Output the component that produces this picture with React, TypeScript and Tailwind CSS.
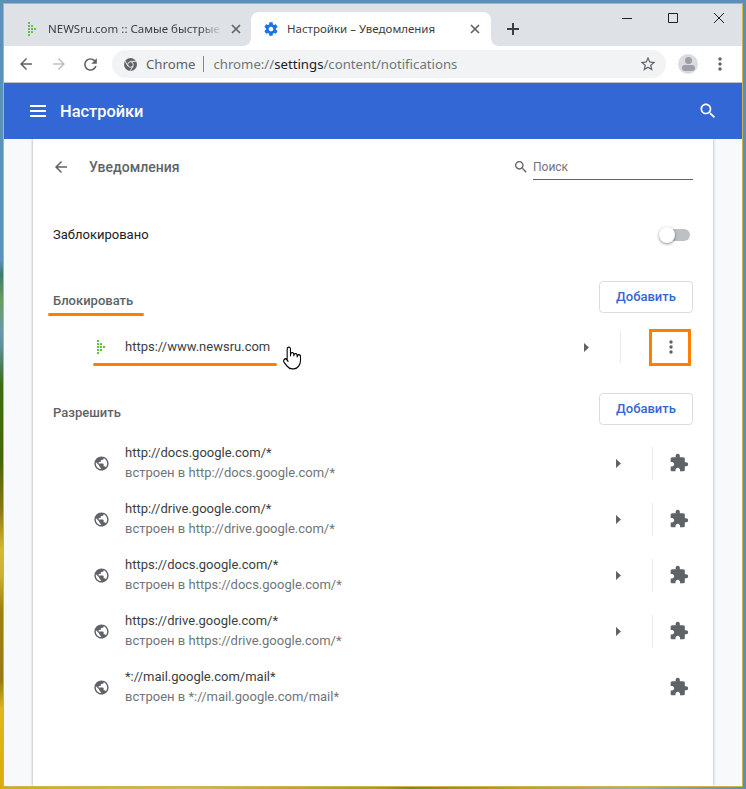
const GLOBE = "M12 2C6.48 2 2 6.48 2 12s4.48 10 10 10 10-4.48 10-10S17.52 2 12 2zm-1 17.93c-3.95-.49-7-3.85-7-7.93 0-.62.08-1.21.21-1.79L9 15v1c0 1.1.9 2 2 2v1.93zm6.9-2.54c-.26-.81-1-1.39-1.9-1.39h-1v-3c0-.55-.45-1-1-1H8v-2h2c.55 0 1-.45 1-1V7h2c1.1 0 2-.9 2-2v-.41c2.93 1.19 5 4.06 5 7.41 0 2.08-.8 3.97-2.1 5.39z";
const PUZZLE = "M20.5 11H19V7c0-1.1-.9-2-2-2h-4V3.5C13 2.12 11.88 1 10.5 1S8 2.12 8 3.5V5H4c-1.1 0-1.99.9-1.99 2v3.8H3.5c1.49 0 2.7 1.21 2.7 2.7s-1.21 2.7-2.7 2.7H2V20c0 1.1.9 2 2 2h3.8v-1.5c0-1.49 1.21-2.7 2.7-2.7 1.49 0 2.7 1.21 2.7 2.7V22H17c1.1 0 2-.9 2-2v-4h1.5c1.38 0 2.5-1.12 2.5-2.5S21.88 11 20.5 11z";
const ARROW = "M20 11H7.83l5.59-5.59L12 4l-8 8 8 8 1.41-1.41L7.83 13H20v-2z";
const REFRESH = "M17.65 6.35C16.2 4.9 14.21 4 12 4c-4.42 0-7.99 3.58-7.99 8s3.57 8 7.99 8c3.73 0 6.84-2.55 7.73-6h-2.08c-.82 2.33-3.04 4-5.65 4-3.31 0-6-2.69-6-6s2.69-6 6-6c1.66 0 3.14.69 4.22 1.78L13 11h7V4l-2.35 2.35z";
const SEARCH = "M15.5 14h-.79l-.28-.27C15.41 12.59 16 11.11 16 9.5 16 5.91 13.09 3 9.5 3S3 5.91 3 9.5 5.91 16 9.5 16c1.61 0 3.09-.59 4.23-1.57l.27.28v.79l5 4.99L20.49 19l-4.99-5zm-6 0C7.01 14 5 11.99 5 9.5S7.01 5 9.5 5 14 7.01 14 9.5 11.99 14 9.5 14z";
const GEAR = "M19.43 12.98c.04-.32.07-.64.07-.98s-.03-.66-.07-.98l2.11-1.65c.19-.15.24-.42.12-.64l-2-3.46c-.12-.22-.39-.3-.61-.22l-2.49 1c-.52-.4-1.08-.73-1.69-.98l-.38-2.65C14.46 2.18 14.25 2 14 2h-4c-.25 0-.46.18-.49.42l-.38 2.65c-.61.25-1.17.59-1.69.98l-2.49-1c-.23-.09-.49 0-.61.22l-2 3.46c-.13.22-.07.49.12.64l2.11 1.65c-.04.32-.07.65-.07.98s.03.66.07.98l-2.11 1.65c-.19.15-.24.42-.12.64l2 3.46c.12.22.39.3.61.22l2.49-1c.52.4 1.08.73 1.69.98l.38 2.65c.03.24.24.42.49.42h4c.25 0 .46-.18.49-.42l.38-2.65c.61-.25 1.17-.59 1.69-.98l2.49 1c.23.09.49 0 .61-.22l2-3.46c.12-.22.07-.49-.12-.64l-2.11-1.65zM12 15.5c-1.93 0-3.5-1.57-3.5-3.5s1.57-3.5 3.5-3.5 3.5 1.57 3.5 3.5-1.57 3.5-3.5 3.5z";
const STAR = "M22 9.24l-7.19-.62L12 2 9.19 8.63 2 9.24l5.46 4.73L5.82 21 12 17.27 18.18 21l-1.63-7.03L22 9.24zM12 15.4l-3.76 2.27 1-4.28-3.32-2.88 4.38-.38L12 6.1l1.71 4.04 4.38.38-3.32 2.88 1 4.28L12 15.4z";

function Icon({ d, size, className }: { d: string; size: number; className?: string }) {
  return (
    <svg width={size} height={size} viewBox="0 0 24 24" className={className} fill="currentColor">
      <path d={d} />
    </svg>
  );
}

function Favicon() {
  const dots = [
    [0, 0], [0, 3], [3, 3], [0, 6], [3, 6], [6, 6], [0, 9], [3, 9], [0, 12],
  ];
  return (
    <svg width="8" height="14" viewBox="0 0 8 14" className="shrink-0">
      {dots.map(([x, y]) => (
        <rect key={`${x}-${y}`} x={x} y={y} width="2" height="2" fill="#5cc73a" />
      ))}
    </svg>
  );
}

function CloseX({ className }: { className?: string }) {
  return (
    <svg width="10" height="10" viewBox="0 0 10 10" className={className} stroke="#5f6368" strokeWidth="1.7" fill="none">
      <path d="M1 1l8 8M9 1l-8 8" />
    </svg>
  );
}

function Triangle() {
  return (
    <svg width="5" height="9" viewBox="0 0 5 9" className="shrink-0">
      <path d="M0 0l5 4.5L0 9z" fill="#5f6368" />
    </svg>
  );
}

function Dots({ tone }: { tone: string }) {
  return (
    <svg width="4" height="14" viewBox="0 0 4 14" className="shrink-0" fill={tone}>
      <circle cx="2" cy="2" r="1.7" />
      <circle cx="2" cy="7" r="1.7" />
      <circle cx="2" cy="12" r="1.7" />
    </svg>
  );
}

function AddButton() {
  return (
    <button className="w-[94px] h-[32px] rounded-[4px] border border-[#dadce0] bg-white text-[13px] font-medium text-[#3367d6] flex items-center justify-center">
      Добавить
    </button>
  );
}

function SiteRow({ title, sub, arrow }: { title: string; sub: string; arrow: boolean }) {
  return (
    <div className="h-[56px] flex items-center pl-[40px]">
      <Icon d={GLOBE} size={17} className="text-[#5f6368] shrink-0" />
      <div className="ml-[15px] flex-1 flex flex-col">
        <div className="text-[13px] leading-[20px] text-[#3c4043]">{title}</div>
        <div className="text-[13px] leading-[20px] text-[#70757a]">{sub}</div>
      </div>
      {arrow && (
        <>
          <Triangle />
          <div className="ml-[31px] w-px h-[32px] bg-[#e8eaed]" />
        </>
      )}
      <Icon d={PUZZLE} size={20} className="ml-[16px] mr-[4px] text-[#5f6368] shrink-0" />
    </div>
  );
}

const rows = [
  ["http://docs.google.com/*", "встроен в http://docs.google.com/*", true],
  ["http://drive.google.com/*", "встроен в http://drive.google.com/*", true],
  ["https://docs.google.com/*", "встроен в https://docs.google.com/*", true],
  ["https://drive.google.com/*", "встроен в https://drive.google.com/*", true],
  ["*://mail.google.com/mail*", "встроен в *://mail.google.com/mail*", false],
] as const;

export default function App() {
  return (
    <div className="w-[746px] h-[789px] pt-[3px] pl-[3px] pr-[3px] pb-[2px] bg-[#5a90b8] bg-no-repeat bg-[linear-gradient(to_bottom,#5b93b8_0,#5b93b8_260px,#3f7a70_275px,#6f9a5a_300px,#6a98a8_330px,#5f90a0_345px,#3f6a10_385px,#46650c_460px,#8a7a10_510px,#d8b830_550px,#d0b030_575px,#a08010_610px,#9a7a10_680px,#dcb820_710px,#dcab0a_789px),linear-gradient(to_right,#d8ac10_0,#c8b860_25%,#b09a20_50%,#7a8a20_55%,#c0a020_70%,#9ab0b0_85%,#5a90b8_100%)] bg-[size:3px_100%,100%_2px] bg-[position:left_top,left_bottom]">
      <div className="h-full flex flex-col border border-[#cfb44e] overflow-hidden font-['Roboto',sans-serif]">
        {/* tab strip */}
        <div className="h-[42px] shrink-0 bg-[#dee1e6] flex items-start font-['Noto_Sans',sans-serif]">
          <div className="mt-[8px] ml-[8px] w-[239px] h-[34px] flex items-center pl-[16px] pr-[10px]">
            <Favicon />
            <div className="ml-[12px] w-[178px] whitespace-nowrap text-[11.5px] text-[#3c4043] [mask-image:linear-gradient(to_right,black_85%,transparent_98%)]">
              NEWSru.com :: Самые быстрые н
            </div>
            <CloseX className="ml-[5px]" />
          </div>
          <div className="relative mt-[8px] w-[240px] h-[34px] bg-white rounded-t-[8px] flex items-center pl-[12px] pr-[11px]">
            <div className="absolute left-[-8px] bottom-0 w-[8px] h-[8px] bg-white">
              <div className="w-full h-full bg-[#dee1e6] rounded-br-[8px]" />
            </div>
            <div className="absolute right-[-8px] bottom-0 w-[8px] h-[8px] bg-white">
              <div className="w-full h-full bg-[#dee1e6] rounded-bl-[8px]" />
            </div>
            <Icon d={GEAR} size={16} className="text-[#1a73e8] shrink-0" />
            <div className="ml-[8px] flex-1 whitespace-nowrap text-[11.5px] text-[#3c4043]">Настройки – Уведомления</div>
            <CloseX />
          </div>
          <svg width="12" height="12" viewBox="0 0 12 12" className="mt-[19px] ml-[16px]" stroke="#3c4043" strokeWidth="2">
            <path d="M6 0v12M0 6h12" />
          </svg>
          <div className="ml-auto flex">
            <div className="w-[46px] h-[28px] flex items-center justify-center">
              <svg width="10" height="10" viewBox="0 0 10 10" stroke="#202124" fill="none"><path d="M0 5.5h10" /></svg>
            </div>
            <div className="w-[46px] h-[28px] flex items-center justify-center">
              <svg width="10" height="10" viewBox="0 0 10 10" stroke="#202124" fill="none"><path d="M.5.5h9v9h-9z" /></svg>
            </div>
            <div className="w-[46px] h-[28px] flex items-center justify-center">
              <svg width="10" height="10" viewBox="0 0 10 10" stroke="#202124" fill="none"><path d="M0 0l10 10M10 0L0 10" /></svg>
            </div>
          </div>
        </div>

        {/* toolbar */}
        <div className="h-[37px] shrink-0 bg-white border-b border-[#bdc1c6] flex items-center font-['Noto_Sans',sans-serif]">
          <Icon d={ARROW} size={18} className="ml-[13px] text-[#5f6368]" />
          <Icon d={ARROW} size={18} className="ml-[15px] text-[#bdc1c6] rotate-180" />
          <Icon d={REFRESH} size={19} className="ml-[13px] text-[#5f6368]" />
          <div className="ml-[12px] w-[554px] h-[28px] rounded-full bg-[#f1f3f4] flex items-center pl-[12px] pr-[9px]">
            <svg width="13" height="13" viewBox="0 0 14 14" className="shrink-0">
              <circle cx="7" cy="7" r="7" fill="#5f6368" />
              <circle cx="7" cy="7" r="3" fill="#5f6368" stroke="#f1f3f4" strokeWidth="1" />
              <path d="M7 3.6h6M4.1 8.7L1.2 3.4M9.9 8.7L6.6 13.8" stroke="#f1f3f4" strokeWidth="1" fill="none" />
            </svg>
            <span className="ml-[9px] mt-[1px] text-[13.2px] text-[#5f6368]">Chrome</span>
            <span className="ml-[8px] w-px h-[16px] bg-[#80868b]" />
            <span className="ml-[9px] mt-[1px] text-[13.2px] text-[#70757a] whitespace-nowrap flex-1">
              chrome://<span className="text-[#202124]">settings</span>/content/notifications
            </span>
            <Icon d={STAR} size={18} className="text-[#5f6368] shrink-0" />
          </div>
          <div className="ml-[12px] w-[20px] h-[20px] rounded-full bg-[#dadce0] flex flex-col items-center pt-[3px] gap-[1px] overflow-hidden">
            <div className="w-[7px] h-[7px] rounded-full bg-[#9aa0a6]" />
            <div className="w-[13px] h-[6px] rounded-full bg-[#9aa0a6]" />
          </div>
          <div className="ml-[20px]"><Dots tone="#5f6368" /></div>
        </div>

        {/* blue header */}
        <div className="h-[56px] shrink-0 bg-[#3367d6] flex items-center text-white">
          <svg width="16" height="12" viewBox="0 0 16 12" className="ml-[26px]" fill="white">
            <rect y="0" width="16" height="2" />
            <rect y="5" width="16" height="2" />
            <rect y="10" width="16" height="2" />
          </svg>
          <span className="ml-[14px] mt-[2px] text-[16.4px] font-medium">Настройки</span>
          <Icon d={SEARCH} size={20} className="ml-auto mr-[24px] text-white" />
        </div>

        {/* page */}
        <div className="flex-1 bg-[#f8f9fa] pl-[29px] pr-[29px] overflow-hidden">
          <div className="h-full bg-white shadow-[0_0_3px_rgba(0,0,0,0.35)] px-[20px]">
            <div className="h-[56px] flex items-center">
              <Icon d={ARROW} size={18} className="-ml-px text-[#5f6368]" />
              <span className="ml-[19px] mt-[1px] text-[14px] font-medium text-[#5f6368]">Уведомления</span>
              <div className="ml-auto flex items-center">
                <Icon d={SEARCH} size={16} className="text-[#5f6368]" />
                <div className="ml-[4px] w-[160px] h-[24px] pt-[3px] mt-[1px] border-b border-[#5f6368] text-[12px] leading-[16px] text-[#70757a]">Поиск</div>
              </div>
            </div>

            <div className="h-[80px] flex items-center justify-between">
              <span className="text-[13px] text-[#202124]">Заблокировано</span>
              <div className="relative w-[31px] h-[16px] mr-[3px] flex items-center justify-end">
                <div className="w-[27px] h-[12px] rounded-full bg-[#bdc1c6]" />
                <div className="absolute left-0 top-0 w-[16px] h-[16px] rounded-full bg-white shadow-[0_1px_3px_rgba(0,0,0,0.45)]" />
              </div>
            </div>

            <div className="mt-[6px] h-[32px] flex items-start justify-between relative">
              <span className="mt-[11px] text-[13px] leading-[18px] font-medium text-[#5f6368]">Блокировать</span>
              <AddButton />
              <div className="absolute left-[-5px] top-[32px] w-[96px] h-[3px] rounded-full bg-[#ff8000]" />
            </div>

            <div className="relative mt-[6px] h-[56px] flex items-center pl-[44px]">
              <Favicon />
              <span className="ml-[20px] flex-1 text-[13px] text-[#3c4043]">https://www.newsru.com</span>
              <Triangle />
              <div className="ml-[31px] w-px h-[32px] bg-[#e8eaed]" />
              <div className="ml-[28px] mr-[2px] w-[42px] h-[37px] border-[3px] border-[#ff8000] flex items-center justify-center pl-[2px]">
                <Dots tone="#5f6368" />
              </div>
              <div className="absolute left-[40px] top-[44px] w-[184px] h-[3px] rounded-full bg-[#ff8000]" />
              <svg width="20" height="26" viewBox="0 0 24 24" preserveAspectRatio="none" className="absolute left-[230px] top-[26px]" fill="white" stroke="#000" strokeWidth="1.3" strokeLinecap="round" strokeLinejoin="round">
                <path d="M6 14V4a2 2 0 0 1 4 0v6a2 2 0 0 1 4 0v1a2 2 0 0 1 4 0v1h3v3l-3 6H9L6 18z" stroke="none" transform="translate(-1 0)" />
                <path d="M22 14a8 8 0 0 1-8 8M18 11v-1a2 2 0 0 0-4 0M14 10V9a2 2 0 0 0-4 0v1M10 9.5V4a2 2 0 0 0-4 0v10M18 11a2 2 0 1 1 4 0v3a8 8 0 0 1-8 8h-2c-2.8 0-4.5-.86-5.99-2.34l-3.6-3.6a2 2 0 0 1 2.83-2.82L7 15" fill="none" transform="translate(-1 0)" />
              </svg>
            </div>

            <div className="mt-[18px] h-[32px] flex items-start justify-between">
              <span className="mt-[11px] text-[13px] leading-[18px] font-medium text-[#5f6368]">Разрешить</span>
              <AddButton />
            </div>

            <div className="mt-[10px]">
              {rows.map(([title, sub, arrow]) => (
                <SiteRow key={title} title={title} sub={sub} arrow={arrow} />
              ))}
            </div>
          </div>
        </div>
      </div>
    </div>
  );
}
